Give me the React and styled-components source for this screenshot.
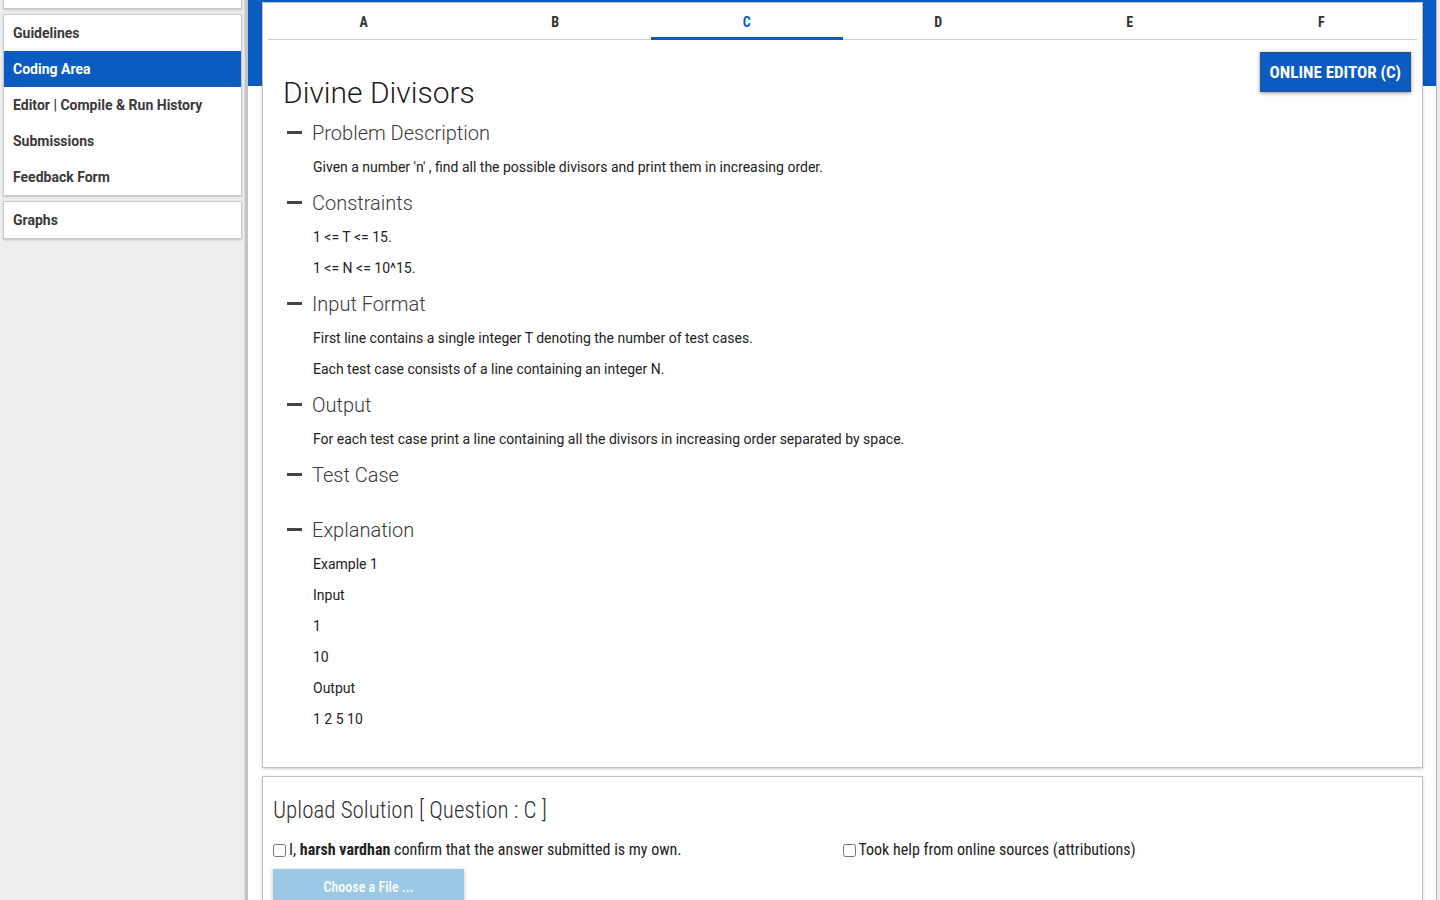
import React from "react";
import styled, { createGlobalStyle } from "styled-components";

const BLUE = "#0b5cc2";
const COND = `"Roboto Condensed", "Liberation Sans Narrow", "Arial Narrow", Roboto, sans-serif`;

const Global = createGlobalStyle`
  html, body { margin: 0; padding: 0; height: 100%; }
  body { font-family: Roboto, "Noto Sans", sans-serif; background: #ffffff; overflow: hidden; }
  * { box-sizing: border-box; }
`;

const Page = styled.div`
  display: grid;
  grid-template-columns: 248px 1fr;
  width: 1440px;
  height: 900px;
  overflow: hidden;
`;

const Sidebar = styled.aside`
  background: #eeeeee;
  border-right: 3px solid #c4c4c4;
  box-shadow: inset -1px 0 0 #dcdcdc;
  padding: 0 3px;
  display: flex;
  flex-direction: column;
  gap: 5px;
`;

const NavCard = styled.div`
  background: #fff;
  border: 1px solid #c8c8c8;
  box-shadow: 0 1px 2px rgba(0, 0, 0, 0.18);
  width: 239px;
  display: flex;
  flex-direction: column;
`;

const StubCard = styled(NavCard)`
  height: 9px;
  border-top: none;
`;

const NavItem = styled.div`
  height: 36px;
  display: flex;
  align-items: center;
  padding-left: 9px;
  font-size: 14px;
  font-weight: 700;
  color: ${(p) => (p.$active ? "#fff" : "#3a3a3a")};
  background: ${(p) => (p.$active ? BLUE : "transparent")};
`;

const Main = styled.main`
  background: linear-gradient(${BLUE} 0 86px, #ffffff 86px);
  border-right: 3px solid #ececec;
  box-shadow: inset -1px 0 0 #b5b5b5;
  padding: 2px 14px 0 14px;
  display: flex;
  flex-direction: column;
  gap: 8px;
`;

const Card = styled.section`
  background: #fff;
  border: 1px solid #c2c2c2;
  box-shadow: 0 1px 3px rgba(0, 0, 0, 0.2);
`;

const ProblemCard = styled(Card)`
  height: 766px;
  padding: 0 5px;
`;

const Tabs = styled.div`
  display: grid;
  grid-template-columns: repeat(6, 1fr);
  border-bottom: 1px solid #cfcfcf;
  height: 37px;
`;

const Tab = styled.div`
  display: flex;
  align-items: center;
  justify-content: center;
  font-family: ${COND};
  font-stretch: condensed;
  font-weight: 700;
  font-size: 14px;
  color: ${(p) => (p.$active ? BLUE : "#333")};
  border-bottom: 3px solid ${(p) => (p.$active ? BLUE : "transparent")};
  margin-bottom: -1px;
  padding-top: 3px;
`;

const Content = styled.div`
  padding: 12px 5px 0 15px;
`;

const EditorButton = styled.button`
  float: right;
  height: 40px;
  padding: 0 9px;
  margin-right: 1px;
  background: ${BLUE};
  color: #fff;
  border: 1px solid #2a4f80;
  box-shadow: 0 1px 4px rgba(0, 0, 0, 0.45);
  font-family: ${COND};
  font-stretch: condensed;
  font-weight: 700;
  font-size: 17px;
  cursor: pointer;
`;

const Title = styled.h1`
  margin: 0;
  height: 40px;
  line-height: 40px;
  margin-top: 21px;
  font-size: 30px;
  font-weight: 300;
  color: #1e1e1e;
`;

const SectionHead = styled.div`
  height: 39px;
  display: flex;
  align-items: center;
  gap: 10px;
  padding-left: 4px;
  font-size: 20px;
  font-weight: 300;
  color: #3a3a3a;
`;

const Dash = styled.span`
  width: 15px;
  height: 3px;
  background: #444;
  display: inline-block;
`;

const Para = styled.p`
  margin: 0;
  padding: 5px 0 5px 30px;
  line-height: 21px;
  font-size: 14px;
  color: #222;
`;

const Spacer = styled.div`
  height: 16px;
`;

const UploadCard = styled(Card)`
  flex: 1;
  padding: 0 10px;
  font-family: ${COND};
  font-stretch: condensed;
`;

const UploadTitle = styled.h2`
  margin: 0;
  padding-top: 20px;
  height: 66px;
  line-height: 28px;
  font-size: 23px;
  font-weight: 300;
  color: #333;
`;

const Checks = styled.div`
  display: grid;
  grid-template-columns: 1fr 1fr;
  font-size: 16px;
  color: #222;
`;

const CheckLabel = styled.label`
  display: flex;
  align-items: center;
  gap: 3px;
  height: 12px;
  & input {
    margin: 2px 0 0 0;
    width: 13px;
    height: 13px;
  }
`;

const FileButton = styled.div`
  margin-top: 14px;
  width: 191px;
  height: 36px;
  background: #9cc8e6;
  color: #fff;
  display: flex;
  align-items: center;
  justify-content: center;
  font-size: 14px;
  font-weight: 500;
  box-shadow: 0 1px 4px rgba(0, 0, 0, 0.25);
`;

const sections = [
  { title: "Problem Description", paras: ["Given a number 'n' , find all the possible divisors and print them in increasing order."] },
  { title: "Constraints", paras: ["1 <= T <= 15.", "1 <= N <= 10^15."] },
  { title: "Input Format", paras: ["First line contains a single integer T denoting the number of test cases.", "Each test case consists of a line containing an integer N."] },
  { title: "Output", paras: ["For each test case print a line containing all the divisors in increasing order separated by space."] },
  { title: "Test Case", paras: [], empty: true },
  { title: "Explanation", paras: ["Example 1", "Input", "1", "10", "Output", "1 2 5 10"] },
];

export default function App() {
  return (
    <>
      <Global />
      <Page>
        <Sidebar>
          <StubCard />
          <NavCard>
            <NavItem>Guidelines</NavItem>
            <NavItem $active>Coding Area</NavItem>
            <NavItem>Editor | Compile &amp; Run History</NavItem>
            <NavItem>Submissions</NavItem>
            <NavItem>Feedback Form</NavItem>
          </NavCard>
          <NavCard>
            <NavItem>Graphs</NavItem>
          </NavCard>
        </Sidebar>
        <Main>
          <ProblemCard>
            <Tabs>
              {["A", "B", "C", "D", "E", "F"].map((t) => (
                <Tab key={t} $active={t === "C"}>{t}</Tab>
              ))}
            </Tabs>
            <Content>
              <EditorButton>ONLINE EDITOR (C)</EditorButton>
              <Title>Divine Divisors</Title>
              {sections.map((s) => (
                <div key={s.title}>
                  <SectionHead>
                    <Dash />
                    {s.title}
                  </SectionHead>
                  {s.paras.map((p, i) => (
                    <Para key={i}>{p}</Para>
                  ))}
                  {s.empty && <Spacer />}
                </div>
              ))}
            </Content>
          </ProblemCard>
          <UploadCard>
            <UploadTitle>Upload Solution [ Question : C ]</UploadTitle>
            <Checks>
              <CheckLabel>
                <input type="checkbox" />
                <span>
                  I, <b>harsh vardhan</b> confirm that the answer submitted is my own.
                </span>
              </CheckLabel>
              <CheckLabel>
                <input type="checkbox" />
                <span>Took help from online sources (attributions)</span>
              </CheckLabel>
            </Checks>
            <FileButton>Choose a File ...</FileButton>
          </UploadCard>
        </Main>
      </Page>
    </>
  );
}
